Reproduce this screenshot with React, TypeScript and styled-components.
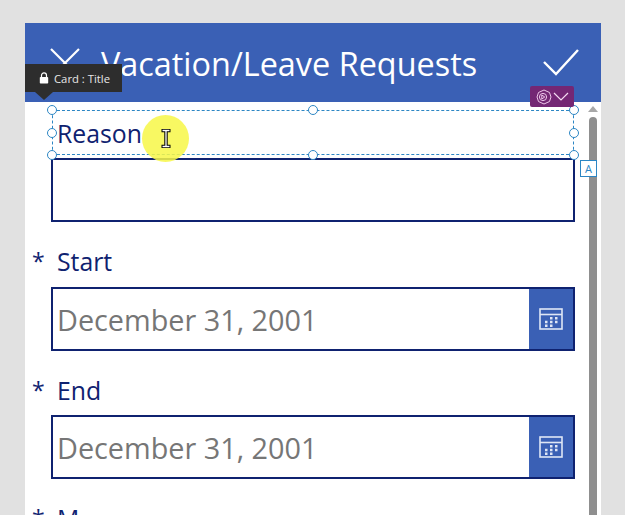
import React from "react";
import styled, { createGlobalStyle } from "styled-components";

const NAVY = "#0f2270";
const BLUE = "#3a60b5";
const HANDLE = "#2c86c4";

const GlobalStyle = createGlobalStyle`
  html, body {
    margin: 0;
    height: 100%;
    overflow: hidden;
    background: #e1e1e1;
    font-family: "Open Sans", "Noto Sans", sans-serif;
  }
`;

const CalendarIcon = () => (
  <svg width="24" height="22" viewBox="0 0 24 22" fill="none">
    <rect x="1" y="1" width="22" height="20" stroke="#dfe6f5" strokeWidth="1.6" />
    <path d="M1 6.500h22" stroke="#dfe6f5" strokeWidth="1.6" />
    <path
      d="M11 9h2.500v2.500H11zM16 9h2.500v2.500H16zM6 12.800h2.500v2.500H6zM11 12.800h2.500v2.500H11zM16 12.800h2.500v2.500H16zM6 16.500h2.500V19H6zM11 16.500h2.500V19H11z"
      fill="#dfe6f5"
    />
  </svg>
);

const DateField = ({ value }: { value: string }) => (
  <FieldBox>
    <Placeholder>{value}</Placeholder>
    <CalendarButton>
      <CalendarIcon />
    </CalendarButton>
  </FieldBox>
);

const App = () => {
  return (
    <Page>
      <GlobalStyle />
      <Panel>
        <Header>
          <svg width="32" height="32" viewBox="0 0 32 32" fill="none" stroke="#fff" strokeWidth="2.2">
            <path d="M2 2l28 28M30 2L2 30" />
          </svg>
          <HeaderTitle>Vacation/Leave Requests</HeaderTitle>
          <svg width="36" height="27" viewBox="0 0 36 27" fill="none" stroke="#fff" strokeWidth="2.4">
            <path d="M1 13l12 12L35 1" />
          </svg>
        </Header>
        <Body>
          <Form>
            <TitleCard>
              <FieldLabel>Reason</FieldLabel>
              <HandleGrid>
                <HandleRow>
                  <Handle />
                  <Handle />
                  <Handle />
                </HandleRow>
                <HandleRow>
                  <Handle />
                  <Handle />
                </HandleRow>
                <HandleRow>
                  <Handle />
                  <Handle />
                  <Handle />
                </HandleRow>
              </HandleGrid>
              <CursorHalo>
                <svg width="12" height="19" viewBox="0 0 12 19" fill="none">
                  <path d="M1.500 1.500h9M1.500 17.500h9M6 1.500v16" stroke="#000" strokeWidth="3.400" />
                  <path d="M2.500 1.500h7M2.500 17.500h7M6 2v15" stroke="#fff" strokeWidth="1.300" />
                </svg>
              </CursorHalo>
            </TitleCard>
            <TextBox />
            <LabelRow $below={11}>
              <Star>*</Star>
              <FieldLabel>Start</FieldLabel>
            </LabelRow>
            <DateField value="December 31, 2001" />
            <LabelRow>
              <Star>*</Star>
              <FieldLabel>End</FieldLabel>
            </LabelRow>
            <DateField value="December 31, 2001" />
            <LabelRow>
              <Star>*</Star>
              <FieldLabel>M</FieldLabel>
            </LabelRow>
          </Form>
          <ScrollTrack>
            <ScrollArrow />
            <ScrollThumb />
          </ScrollTrack>
        </Body>

        <Tooltip>
          <svg width="10" height="12" viewBox="0 0 10 12">
            <path d="M2.500 5V3.400a2.500 2.500 0 015 0V5" fill="none" stroke="#fff" strokeWidth="1.200" />
            <rect x="0.800" y="5" width="8.400" height="6.600" rx="0.800" fill="#fff" />
          </svg>
          Card : Title
        </Tooltip>

        <AiChip>
          <svg width="16" height="16" viewBox="0 0 16 16" fill="none" stroke="#eec6ea" strokeWidth="1">
            <path d="M8 1l5.500 2.500L15 8l-1.500 4.500L8 15l-5.500-2.500L1 8l1.500-4.500z" />
            <circle cx="7" cy="8" r="3.600" />
            <path d="M5.800 6l3 2-3 2z" />
          </svg>
          <svg width="16" height="9" viewBox="0 0 16 9" fill="none" stroke="#f4dcf1" strokeWidth="1.200">
            <path d="M1 1l7 7 7-7" />
          </svg>
        </AiChip>

        <FormatBadge>A</FormatBadge>
      </Panel>
    </Page>
  );
};

export default App;

const Page = styled.div`
  height: 515px;
  padding: 23px 24px 0 25px;
  box-sizing: border-box;
  overflow: hidden;
`;
const Panel = styled.div`
  position: relative;
  height: 492px;
  background: #fff;
  overflow: hidden;
`;
const Header = styled.div`
  height: 79px;
  background: ${BLUE};
  display: flex;
  align-items: center;
  padding: 0 22px 0 24px;
  color: #fff;
`;
const HeaderTitle = styled.div`
  flex: 1;
  margin-left: 20px;
  font-size: 32.400px;
  line-height: 40px;
  white-space: nowrap;
`;
const Body = styled.div`
  display: flex;
  height: 413px;
`;
const Form = styled.div`
  flex: 1;
  min-width: 0;
  padding: 8px 0 0 8px;
`;
const TitleCard = styled.div`
  position: relative;
  box-sizing: border-box;
  width: 522px;
  height: 45px;
  margin-left: 19px;
  padding-left: 4px;
  display: flex;
  align-items: center;
  border: 1px dashed ${HANDLE};
`;
const FieldLabel = styled.span`
  font-size: 24.800px;
  line-height: 30px;
  color: ${NAVY};
`;
const TextBox = styled.div`
  box-sizing: border-box;
  width: 524px;
  height: 64px;
  margin: 3px 0 1px 18px;
  border: 2px solid ${NAVY};
`;
const LabelRow = styled.div<{ $below?: number }>`
  display: flex;
  height: 30px;
  margin: 24px 0 ${(p) => p.$below ?? 10}px;
`;
const Star = styled.span`
  width: 25px;
  margin-left: -1px;
  font-size: 23px;
  line-height: 30px;
  color: ${NAVY};
`;
const FieldBox = styled.div`
  box-sizing: border-box;
  display: flex;
  width: 524px;
  height: 64px;
  margin-left: 18px;
  border: 2px solid ${NAVY};
`;
const Placeholder = styled.div`
  flex: 1;
  padding-left: 4px;
  font-size: 28.800px;
  line-height: 62px;
  color: #767676;
  white-space: nowrap;
`;
const CalendarButton = styled.div`
  width: 44px;
  background: ${BLUE};
  display: flex;
  align-items: center;
  justify-content: center;
`;
const ScrollTrack = styled.div`
  width: 11px;
  margin-right: 3px;
  display: flex;
  flex-direction: column;
  align-items: center;
  padding-top: 4px;
`;
const ScrollArrow = styled.div`
  border-left: 5px solid transparent;
  border-right: 5px solid transparent;
  border-bottom: 6px solid #a8a8a8;
`;
const ScrollThumb = styled.div`
  width: 8px;
  flex: 1;
  margin-top: 5px;
  border-radius: 4px 4px 0 0;
  background: #8f8f8f;
`;
const Tooltip = styled.div`
  position: absolute;
  left: 0;
  top: 41px;
  width: 97px;
  height: 28px;
  box-sizing: border-box;
  padding-left: 14px;
  display: flex;
  align-items: center;
  gap: 5px;
  background: #2d2d2d;
  color: #e8e8e8;
  font-size: 11.300px;
  white-space: nowrap;
  &::after {
    content: "";
    position: absolute;
    left: 10px;
    top: 100%;
    border-left: 9px solid transparent;
    border-right: 9px solid transparent;
    border-top: 8px solid #2d2d2d;
  }
`;
const HandleGrid = styled.div`
  position: absolute;
  inset: -6px;
  display: flex;
  flex-direction: column;
  justify-content: space-between;
`;
const HandleRow = styled.div`
  display: flex;
  justify-content: space-between;
`;
const Handle = styled.span`
  box-sizing: border-box;
  width: 10px;
  height: 10px;
  border: 1px solid ${HANDLE};
  border-radius: 50%;
  background: #fff;
`;
const AiChip = styled.div`
  position: absolute;
  left: 505px;
  top: 63px;
  width: 44px;
  height: 21px;
  box-sizing: border-box;
  padding: 0 5px 0 6px;
  display: flex;
  align-items: center;
  justify-content: space-between;
  border-radius: 2px;
  background: #742774;
`;
const FormatBadge = styled.div`
  position: absolute;
  left: 555px;
  top: 137px;
  width: 17px;
  height: 17px;
  box-sizing: border-box;
  border: 1px solid ${HANDLE};
  background: #fff;
  color: ${HANDLE};
  font-size: 11px;
  line-height: 15px;
  text-align: center;
`;
const CursorHalo = styled.div`
  position: absolute;
  left: 89px;
  top: 4px;
  width: 47px;
  height: 47px;
  border-radius: 50%;
  background: rgba(247, 247, 70, 0.85);
  display: flex;
  align-items: center;
  justify-content: center;
`;
